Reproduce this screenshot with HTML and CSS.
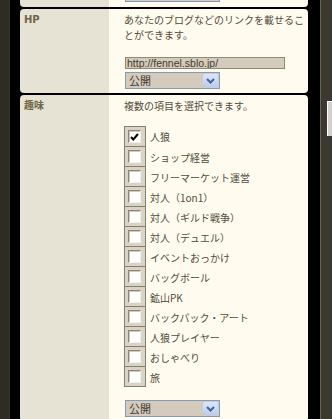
FILE: index.html
```html
<!DOCTYPE html>
<html lang="ja">
<head>
<meta charset="utf-8">
<title>プロフィール編集</title>
<link rel="stylesheet" href="styles.css">
</head>
<body>
<div class="page">
  <div class="edge-left"></div>
  <div class="gutter"></div>
  <main class="form">
    <div class="row row-cut">
      <div class="label"></div>
      <div class="value value-cut">
        <div class="select">
          <span class="select-text"></span>
          <span class="select-btn"><svg width="9" height="6" viewBox="0 0 9 6"><polyline points="1,1 4.5,4.5 8,1" fill="none" stroke="#4d6185" stroke-width="2"/></svg></span>
        </div>
      </div>
    </div>
    <div class="row">
      <div class="label">HP</div>
      <div class="value">
        <p class="note">あなたのブログなどのリンクを載せるこ<br>とができます。</p>
        <input class="text-input" type="text" value="http://fennel.sblo.jp/">
        <div class="select">
          <span class="select-text">公開</span>
          <span class="select-btn"><svg width="9" height="6" viewBox="0 0 9 6"><polyline points="1,1 4.5,4.5 8,1" fill="none" stroke="#4d6185" stroke-width="2"/></svg></span>
        </div>
      </div>
    </div>
    <div class="row row-last">
      <div class="label">趣味</div>
      <div class="value">
        <p class="note">複数の項目を選択できます。</p>
        <ul class="checks">
          <li class="check"><span class="cb-frame"><span class="cb"><svg width="9" height="8" viewBox="0 0 9 8"><polyline points="1,4 3.3,6.5 8,1" fill="none" stroke="#000" stroke-width="2"/></svg></span></span><span class="check-label">人狼</span></li>
          <li class="check"><span class="cb-frame"><span class="cb"></span></span><span class="check-label">ショップ経営</span></li>
          <li class="check"><span class="cb-frame"><span class="cb"></span></span><span class="check-label">フリーマーケット運営</span></li>
          <li class="check"><span class="cb-frame"><span class="cb"></span></span><span class="check-label">対人（1on1）</span></li>
          <li class="check"><span class="cb-frame"><span class="cb"></span></span><span class="check-label">対人（ギルド戦争）</span></li>
          <li class="check"><span class="cb-frame"><span class="cb"></span></span><span class="check-label">対人（デュエル）</span></li>
          <li class="check"><span class="cb-frame"><span class="cb"></span></span><span class="check-label">イベントおっかけ</span></li>
          <li class="check"><span class="cb-frame"><span class="cb"></span></span><span class="check-label">バッグボール</span></li>
          <li class="check"><span class="cb-frame"><span class="cb"></span></span><span class="check-label">鉱山PK</span></li>
          <li class="check"><span class="cb-frame"><span class="cb"></span></span><span class="check-label">バックパック・アート</span></li>
          <li class="check"><span class="cb-frame"><span class="cb"></span></span><span class="check-label">人狼プレイヤー</span></li>
          <li class="check"><span class="cb-frame"><span class="cb"></span></span><span class="check-label">おしゃべり</span></li>
          <li class="check"><span class="cb-frame"><span class="cb"></span></span><span class="check-label">旅</span></li>
        </ul>
        <div class="select">
          <span class="select-text">公開</span>
          <span class="select-btn"><svg width="9" height="6" viewBox="0 0 9 6"><polyline points="1,1 4.5,4.5 8,1" fill="none" stroke="#4d6185" stroke-width="2"/></svg></span>
        </div>
      </div>
    </div>
  </main>
  <div class="gutter gutter-right"></div>
  <div class="edge-right"><div class="peek"></div></div>
</div>
</body>
</html>
```
FILE: styles.css
```css
html, body {
  margin: 0;
  padding: 0;
  background: #000;
  overflow: hidden;
}
body {
  font-family: "Noto Sans CJK JP", sans-serif;
  font-size: 10px;
  color: #514b3b;
}
.page {
  display: flex;
  height: 419px;
  overflow: hidden;
}
.edge-left {
  width: 9px;
  flex: none;
  background: #2e2c25;
  border-right: 1px solid #38352d;
}
.gutter {
  width: 10px;
  flex: none;
  background: #000;
}
.gutter-right {
  width: 12px;
}
.edge-right {
  flex: 1;
  background: #3a382f;
  border-left: 1px solid #6a634d;
  padding-top: 101px;
  padding-left: 6px;
}
.peek {
  height: 34px;
  background: #d4d0c8;
  border-top: 1px solid #fff;
  border-left: 1px solid #fff;
}
.form {
  width: 288px;
  flex: none;
  display: flex;
  flex-direction: column;
  gap: 2px;
  background: #000;
}
.row {
  display: flex;
  flex: none;
}
.label {
  width: 89px;
  flex: none;
  box-sizing: border-box;
  padding: 3px 0 0 4px;
  background: #e6e3d5;
  border-radius: 4px 0 0 4px;
  font-family: "DejaVu Sans", "Noto Sans CJK JP", sans-serif;
  font-weight: bold;
  font-size: 10px;
  line-height: 15px;
  color: #6f6646;
}
.value {
  flex: 1;
  background: #fffbef;
  border-radius: 0 4px 4px 0;
  padding: 3px 0 4px 15px;
  display: flex;
  flex-direction: column;
  align-items: flex-start;
}
.row-cut {
  height: 7px;
  overflow: hidden;
}
.row-cut .label {
  border-radius: 0 0 0 4px;
}
.row-cut .value {
  border-radius: 0 0 4px 0;
  padding: 0 0 5px 16px;
  justify-content: flex-end;
}
.row-last {
  height: 326px;
}
.note {
  margin: 0;
  line-height: 15px;
  white-space: nowrap;
}
.text-input {
  margin: 15px 0 0 1px;
  width: 160px;
  height: 12px;
  box-sizing: border-box;
  padding: 0 0 0 1px;
  border: 1px solid #8f8878;
  background: #d4cbbc;
  font-family: "Liberation Sans", sans-serif;
  font-size: 10.5px;
  line-height: 10px;
  color: #3f3b30;
  outline: none;
}
.select {
  display: flex;
  width: 95px;
  height: 17px;
  box-sizing: border-box;
  flex: none;
  margin: 3px 0 0 1px;
  border: 1px solid #7f9db9;
  background: #d4cbbc;
}
.row-cut .select {
  margin: 0;
}
.select-text {
  flex: 1;
  padding-left: 3px;
  line-height: 15px;
  font-size: 11px;
  color: #3d3a30;
}
.select-btn {
  width: 15px;
  margin: 1px;
  border-radius: 2px;
  background: linear-gradient(#dbe6fd, #b7ccf7);
  display: flex;
  align-items: center;
  justify-content: center;
}
.checks {
  list-style: none;
  margin: 13px 0 0 0;
  padding: 0;
}
.check {
  display: flex;
  align-items: center;
}
.cb-frame {
  width: 22px;
  height: 20px;
  box-sizing: border-box;
  border: 1px solid #857f70;
  border-top: none;
  background: #d9d4c6;
  display: flex;
  align-items: center;
  padding-left: 3px;
}
.check:first-child .cb-frame {
  border-top: 1px solid #857f70;
  height: 21px;
}
.cb {
  width: 13px;
  height: 13px;
  box-sizing: border-box;
  background: #fff;
  border-top: 1px solid #8c8677;
  border-left: 1px solid #8c8677;
  border-right: 1px solid #f3f0e7;
  border-bottom: 1px solid #f3f0e7;
  box-shadow: inset 1px 1px 0 #cfcabc;
  display: flex;
  align-items: center;
  justify-content: center;
}
.check-label {
  margin-left: 4px;
  line-height: 15px;
  white-space: nowrap;
}
.checks + .select {
  margin-top: 13px;
}
```
